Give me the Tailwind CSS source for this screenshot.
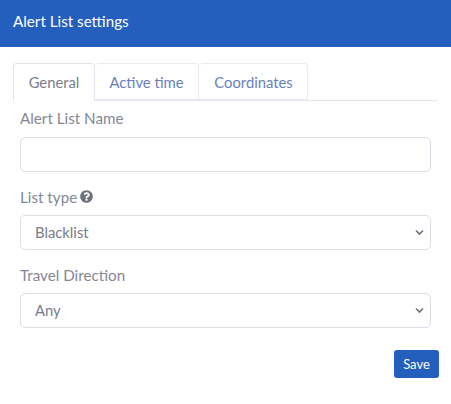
<!DOCTYPE html>
<html lang="en">
<head>
    <meta charset="utf-8"/>
    <title>Alert List settings</title>
    <script src="https://cdn.jsdelivr.net/npm/@tailwindcss/browser@4"></script>
</head>
<body class="bg-white font-['Lato',sans-serif] text-[14.8px] text-[#858796] overflow-hidden">

    <div class="h-[47px] bg-[#255fbd] pl-[13px] pt-[10px] text-[15.2px] text-white leading-[22px]">Alert List settings</div>

    <div class="pl-[13px] pr-[13px] pt-[16px]">
        <div class="flex h-[38px] border-b border-[#e3e5ee]">
            <a class="w-[82px] h-[38px] bg-white border border-[#e3e5ee] border-b-white rounded-t-[4px] text-center leading-[36px] text-[#7a7c8a]">General</a>
            <a class="w-[104px] h-[37px] border border-l-0 border-[#e8eaf1] rounded-t-[4px] text-center leading-[36px] text-[#6a80bd]">Active time</a>
            <a class="w-[109px] h-[37px] border border-l-0 border-[#e8eaf1] rounded-t-[4px] pl-[1px] text-center leading-[36px] text-[#6a80bd]">Coordinates</a>
        </div>

        <form class="pl-[7px] pr-[7px]">
            <label class="block h-[36px] pt-[6px] text-[15.2px] leading-[22px]">Alert List Name</label>
            <input type="text" class="block w-full h-[35px] border border-[#dcdde6] rounded-[5px] bg-white"/>

            <label class="flex items-start gap-[3px] h-[43px] pt-[14px] text-[15.2px] leading-[22px]">
                List type
                <svg class="w-[13px] h-[13px] mt-[4px]" viewBox="0 0 512 512"><path fill="#6e707e" d="M504 256c0 137-111 248-248 248S8 393 8 256 119 8 256 8s248 111 248 248zM263 90c-54 0-89 23-116 64-4 5-3 12 3 16l35 26c5 4 13 3 17-2 18-23 30-36 58-36 21 0 46 13 46 33 0 15-12 23-33 34-23 13-54 30-54 71v7c0 7 5 12 12 12h56c7 0 12-5 12-12v-2c0-29 84-30 84-107 0-59-61-104-120-104zm-7 248c-26 0-46 21-46 46s20 46 46 46 46-21 46-46-20-46-46-46z"/></svg>
            </label>
            <div class="relative">
                <div class="h-[35px] border border-[#dcdde6] rounded-[5px] pl-[14px] leading-[33px] text-[#7a7c8a]">Blacklist</div>
                <svg class="absolute right-[7px] top-[14px] w-[9px] h-[7px]" viewBox="0 0 9 7"><path d="M1 1.5 4.5 5 8 1.5" fill="none" stroke="#6e707e" stroke-width="1.6"/></svg>
            </div>

            <label class="block h-[43px] pt-[14px] text-[15.2px] leading-[22px]">Travel Direction</label>
            <div class="relative">
                <div class="h-[35px] border border-[#dcdde6] rounded-[5px] pl-[14px] leading-[33px] text-[#7a7c8a]">Any</div>
                <svg class="absolute right-[7px] top-[14px] w-[9px] h-[7px]" viewBox="0 0 9 7"><path d="M1 1.5 4.5 5 8 1.5" fill="none" stroke="#6e707e" stroke-width="1.6"/></svg>
            </div>

            <div class="flex justify-end mt-[22px] -mr-[8px]">
                <button type="button" class="w-[45px] h-[28px] bg-[#255fbd] pt-[1px] text-white text-[13px] rounded-[3px]">Save</button>
            </div>
        </form>
    </div>

</body>
</html>
